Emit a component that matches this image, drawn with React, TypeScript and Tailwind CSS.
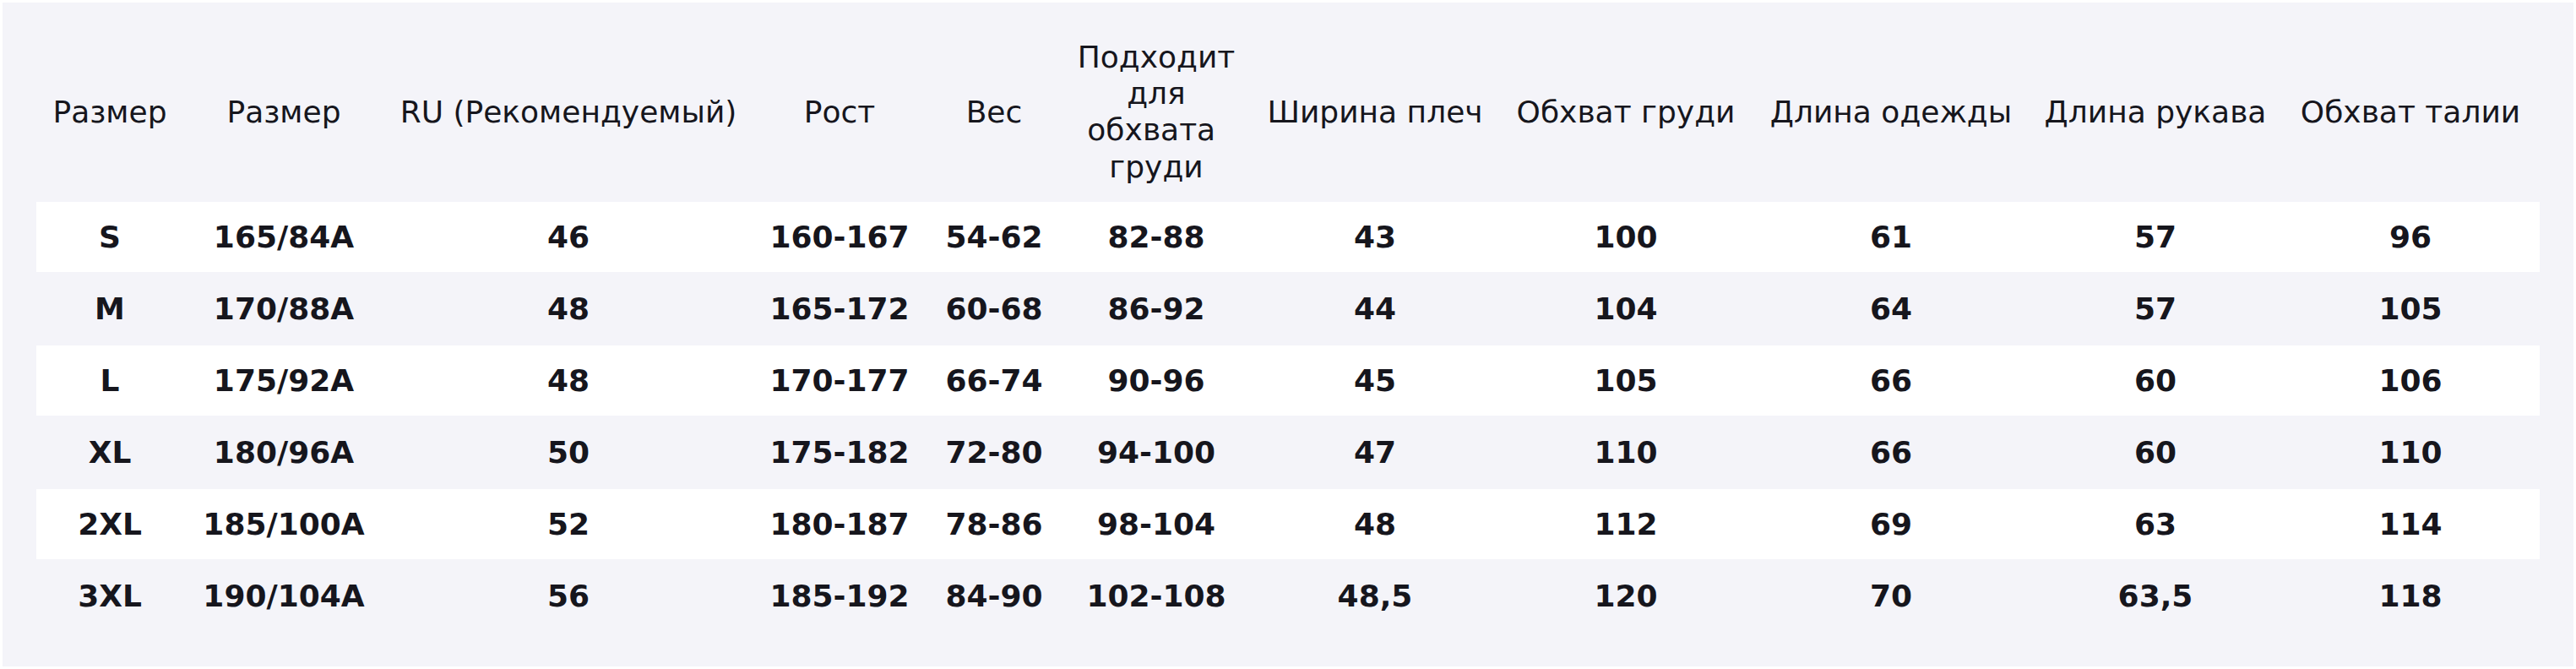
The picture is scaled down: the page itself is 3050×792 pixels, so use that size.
import React from "react";

const headers = [
  "Размер",
  "Размер",
  "RU (Рекомендуемый)",
  "Рост",
  "Вес",
  "Подходит для обхвата\u00a0 груди",
  "Ширина плеч",
  "Обхват груди",
  "Длина одежды",
  "Длина рукава",
  "Обхват талии",
];

const rows = [
  ["S", "165/84A", "46", "160-167", "54-62", "82-88", "43", "100", "61", "57", "96"],
  ["M", "170/88A", "48", "165-172", "60-68", "86-92", "44", "104", "64", "57", "105"],
  ["L", "175/92A", "48", "170-177", "66-74", "90-96", "45", "105", "66", "60", "106"],
  ["XL", "180/96A", "50", "175-182", "72-80", "94-100", "47", "110", "66", "60", "110"],
  ["2XL", "185/100A", "52", "180-187", "78-86", "98-104", "48", "112", "69", "63", "114"],
  ["3XL", "190/104A", "56", "185-192", "84-90", "102-108", "48,5", "120", "70", "63,5", "118"],
];

const cols =
  "grid grid-cols-[174px_238px_436px_206px_160px_224px_294px_300px_328px_298px_306px]";

export default function App() {
  return (
    <div
      className="w-[3050px] h-[792px] bg-white p-[3px]"
      style={{ fontFamily: '"DejaVu Sans", sans-serif' }}
    >
      <div className="h-full bg-[#f4f4f9] px-[40px] pt-[40px] pb-[40px] text-[#16161d] text-[36px] leading-[1.2]">
        <div className={`${cols} items-center text-center pt-[3px] pb-[20px]`}>
          {headers.map((h, i) => (
            <div key={i}>{h}</div>
          ))}
        </div>
        {rows.map((r, ri) => (
          <div
            key={ri}
            className={`${cols} items-center text-center font-bold ${
              ri % 2 === 0 ? "bg-white h-[83px]" : "bg-[#f4f4f9] h-[87px]"
            }`}
          >
            {r.map((c, ci) => (
              <div key={ci}>{c}</div>
            ))}
          </div>
        ))}
      </div>
    </div>
  );
}
